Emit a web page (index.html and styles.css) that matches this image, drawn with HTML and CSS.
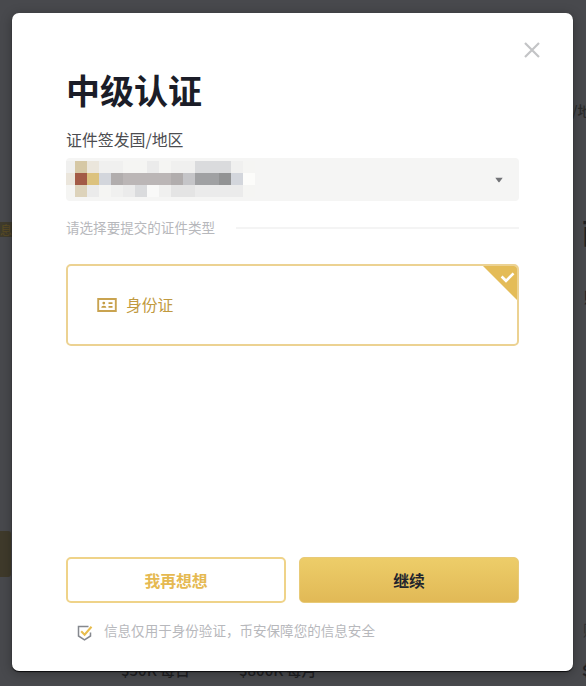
FILE: index.html
```html
<!DOCTYPE html>
<html lang="zh-CN">
<head>
<meta charset="utf-8">
<title>中级认证</title>
<link rel="stylesheet" href="styles.css">
</head>
<body>
<div class="backdrop" aria-hidden="true">
  <span class="bg-text bg-region">/地</span>
  <span class="bg-tag">息</span>
  <span class="bg-text bg-heading">面</span>
  <span class="bg-text bg-side">账</span>
  <span class="bg-button"></span>
  <span class="bg-text bg-daily">$50K 每日</span>
  <span class="bg-text bg-monthly">$800K 每月</span>
  <span class="bg-text bg-limit">账</span>
  <span class="bg-text bg-price">$</span>
</div>
<main class="modal">
  <button class="close" aria-label="关闭">
    <svg width="16" height="16" viewBox="0 0 16 16"><path d="M1 1L15 15M15 1L1 15" fill="none" stroke="#c3c4c6" stroke-width="2.2"/></svg>
  </button>
  <h1 class="title">中级认证</h1>
  <div class="label">证件签发国/地区</div>
  <div class="select">
    <div class="mosaic">
      <i class="c-f1"></i><i class="c-tan"></i><i class="c-cream"></i><i class="c-f1"></i><i class="c-f1"></i><i class="c-f4"></i><i class="c-f4"></i><i class="c-eb"></i><i class="c-f4"></i><i class="c-f1"></i><i class="c-f1"></i><i class="c-da"></i><i class="c-da"></i><i class="c-da"></i><i class="c-f1"></i><i class="c-f4"></i>
      <i class="c-cream"></i><i class="c-red"></i><i class="c-gold"></i><i class="c-blue"></i><i class="c-b1"></i><i class="c-b9"></i><i class="c-b9"></i><i class="c-b9"></i><i class="c-b9"></i><i class="c-b1"></i><i class="c-c8"></i><i class="c-a0"></i><i class="c-a0"></i><i class="c-94"></i><i class="c-blue"></i><i class="c-fc"></i>
      <i class="c-f4"></i><i class="c-sand"></i><i class="c-eb"></i><i class="c-f4"></i><i class="c-f1"></i><i class="c-eb"></i><i class="c-da"></i><i class="c-f7"></i><i class="c-f1"></i><i class="c-e4"></i><i class="c-e4"></i><i class="c-eb"></i><i class="c-eb"></i><i class="c-eb"></i><i class="c-eb"></i><i class="c-f4"></i>
    </div>
    <svg class="arrow" width="8" height="6" viewBox="0 0 8 6"><path d="M.3 .7H7.7L4.6 5Q4 5.7 3.4 5Z" fill="#737477"/></svg>
  </div>
  <div class="prompt"><span>请选择要提交的证件类型</span></div>
  <div class="option">
    <svg class="id-icon" width="20" height="14" viewBox="0 0 20 14"><path d="M1.2 1H18.8V13H1.2Z" fill="none" stroke="#c9a350" stroke-width="1.9"/><circle cx="6.8" cy="5.1" r="1.4" fill="#c49c42"/><path d="M4.2 9.8Q4.2 7.7 6.8 7.7T9.4 9.8ZM11.5 4.2H15.5V6H11.5ZM11.5 8H15.5V9.8H11.5Z" fill="#c49c42"/></svg>
    <span>身份证</span>
    <svg class="corner" width="36" height="36" viewBox="0 0 36 36"><path d="M0 0H36V36Z" fill="#e4bc58"/><path d="M19.6 11.5L24 15.8L31.5 8.3" fill="none" stroke="#fff" stroke-width="2.6"/></svg>
  </div>
  <div class="actions">
    <button class="btn btn-outline">我再想想</button>
    <button class="btn btn-primary">继续</button>
  </div>
  <div class="note">
    <svg width="16" height="16" viewBox="0 0 16 16"><path d="M11.5 1.5H1.5V11L7.5 14.8L13.5 11V7.5" fill="none" stroke="#85888e" stroke-width="1.5"/><path d="M4.2 6.3L7.6 9.7L14.5 1.8" fill="none" stroke="#e8bd4e" stroke-width="2.1"/></svg>
    <span>信息仅用于身份验证，币安保障您的信息安全</span>
  </div>
</main>
</body>
</html>
```
FILE: styles.css
```css
* { box-sizing: border-box; }
body {
  margin: 0;
  width: 586px;
  height: 686px;
  overflow: hidden;
  padding: 13px 13px 15px 12px;
  background: #48494d;
  font-family: "Noto Sans CJK SC", sans-serif;
}
button { font-family: inherit; padding: 0; }
.backdrop { position: absolute; inset: 0; overflow: hidden; }
.bg-text, .bg-tag, .bg-button { position: absolute; white-space: nowrap; line-height: 20px; }
.bg-text { color: #1f2023; font-size: 15px; font-weight: 500; }
.bg-region { left: 572px; top: 100px; color: #2b2b2b; font-size: 14px; }
.bg-tag { left: 0; top: 222px; width: 12px; height: 15px; overflow: hidden; background: #3f3b2d; color: #5c4d24; font-size: 12px; line-height: 15px; }
.bg-heading { left: 582px; top: 215px; font-size: 28px; line-height: 34px; font-weight: 700; }
.bg-side { left: 584px; top: 287px; }
.bg-button { left: 0; top: 531px; width: 11px; height: 46px; background: #3f3a2b; border-radius: 0 3px 3px 0; }
.bg-daily { left: 121px; top: 660px; }
.bg-monthly { left: 239px; top: 660px; }
.bg-limit { left: 583px; top: 620px; color: #303134; }
.bg-price { left: 582px; top: 660px; font-weight: 700; }
.modal {
  position: relative;
  height: 658px;
  padding: 54px 54px 0;
  background: #fff;
  border-radius: 7px;
  box-shadow: 0 1px 1px #0b0b0d, 0 2px 12px rgba(0, 0, 0, .3);
}
.close {
  position: absolute;
  top: 29px;
  right: 33px;
  width: 16px;
  height: 16px;
  border: 0;
  background: none;
}
.close svg { display: block; }
.title { margin: 0; color: #1b1d28; font-size: 34px; line-height: 46px; font-weight: 700; }
.label { margin-top: 16px; color: #4c4d50; font-size: 15.9px; line-height: 22px; }
.select {
  display: flex;
  align-items: center;
  justify-content: space-between;
  height: 43px;
  margin-top: 7px;
  padding-right: 16px;
  background: #f5f5f4;
  border-radius: 4px;
}
.mosaic { display: grid; grid-template-columns: 9px repeat(15, 12px); grid-auto-rows: 12px; margin-top: -2px; }
.c-f1 { background: #f0f0ef; }
.c-f4 { background: #f5f5f3; }
.c-f7 { background: #f9f9f8; }
.c-fc { background: #fcfcfa; }
.c-eb { background: #ebebeb; }
.c-e4 { background: #e4e4e4; }
.c-da { background: #dadbdd; }
.c-c8 { background: #c5c5c8; }
.c-b9 { background: #bbb6b6; }
.c-b1 { background: #b1adad; }
.c-a0 { background: #a0a1a3; }
.c-94 { background: #929394; }
.c-tan { background: #d6c8a5; }
.c-sand { background: #ddd3bb; }
.c-cream { background: #ebe6dc; }
.c-red { background: #a35b46; }
.c-gold { background: #dcc27e; }
.c-blue { background: #d3d6dc; }
.prompt {
  display: flex;
  align-items: center;
  gap: 21px;
  height: 22px;
  margin-top: 16px;
  color: #b7b8bc;
  font-size: 13.55px;
  line-height: 22px;
}
.prompt span { margin-top: -2px; }
.prompt::after { content: ""; flex: 1; height: 2px; background: #f4f4f4; }
.option {
  position: relative;
  display: flex;
  align-items: center;
  gap: 9px;
  height: 82px;
  margin-top: 25px;
  padding-left: 29px;
  border: 2px solid #ecd292;
  border-radius: 5px;
  overflow: hidden;
  color: #c19a3f;
  font-size: 15.8px;
}
.option span { margin-top: -2px; }
.corner { position: absolute; top: -1px; right: -1px; }
.actions { display: grid; grid-template-columns: 1fr 1fr; gap: 13px; margin-top: 211px; }
.btn { height: 46px; border-radius: 5px; font-size: 15.8px; font-weight: 700; }
.btn-outline { border: 2px solid #efd389; background: #fff; color: #e5b951; }
.btn-primary { border: 1px solid #e8ca78; background: linear-gradient(#edcd69, #e1b956); color: #22242c; }
.note {
  display: flex;
  align-items: center;
  gap: 11px;
  margin-top: 16px;
  padding-left: 11px;
  color: #b7b8bc;
  font-size: 13.55px;
  line-height: 22px;
}
.note svg { margin-top: 5px; }
```
